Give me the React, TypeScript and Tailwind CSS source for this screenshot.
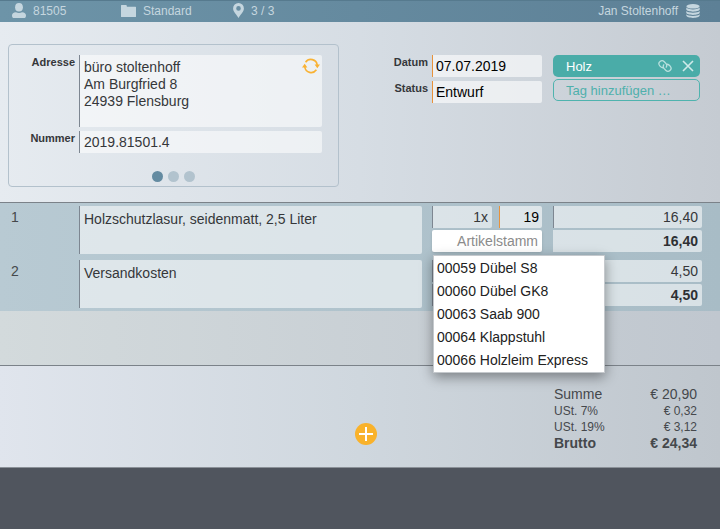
import { useState } from "react";
import type { ReactNode } from "react";

interface LineItem {
  pos: number;
  text: string;
  qty: string;
  vat: string;
  price: string;
  total: string;
}

const ITEMS: LineItem[] = [
  { pos: 1, text: "Holzschutzlasur, seidenmatt, 2,5 Liter", qty: "1x", vat: "19", price: "16,40", total: "16,40" },
  { pos: 2, text: "Versandkosten", qty: "1x", vat: "7", price: "4,50", total: "4,50" },
];

const ARTICLES = ["00059 Dübel S8", "00060 Dübel GK8", "00063 Saab 900", "00064 Klappstuhl", "00066 Holzleim Express"];

const TOTALS = [
  { label: "Summe", value: "€ 20,90", className: "h-[18px] text-sm leading-4" },
  { label: "USt. 7%", value: "€ 0,32", className: "text-xs leading-4" },
  { label: "USt. 19%", value: "€ 3,12", className: "text-xs leading-4" },
  { label: "Brutto", value: "€ 24,34", className: "text-sm leading-4 font-bold" },
];

const FIELD = "block w-full rounded-r-xs border-l border-[#7d8691] bg-white/55 px-1 outline-none";
const FIELD_ORANGE = "block w-full rounded-r-xs border-l border-[#e8923a] bg-white/60 px-[3px] text-black outline-none";
const AMOUNT = "block h-[22px] w-full rounded-r-xs bg-white/55 pr-1 text-right outline-none";

function UserIcon() {
  return (
    <svg viewBox="0 0 14 15" className="h-[15px] w-[14px]" fill="currentColor" aria-hidden="true">
      <ellipse cx="7" cy="4.3" rx="3.9" ry="4.3" />
      <path d="M4 9.2C5.5 10.2 8.5 10.2 10 9.2C12.6 9.4 14 10.7 14 12.4C14 14 13.3 15 11.8 15H2.2C.7 15 0 14 0 12.4C0 10.7 1.4 9.4 4 9.2Z" />
    </svg>
  );
}

function FolderIcon() {
  return (
    <svg viewBox="0 0 15 12" className="h-3 w-[15px]" fill="currentColor" aria-hidden="true">
      <path d="M0 .5Q0 0 .5 0H5Q5.6 0 5.7 .6L5.9 1.7H14.5Q15 1.7 15 2.2V11.5Q15 12 14.5 12H.5Q0 12 0 11.5Z" />
    </svg>
  );
}

function PinIcon() {
  return (
    <svg viewBox="0 0 11 15" className="h-[15px] w-[11px]" fill="currentColor" aria-hidden="true">
      <path
        fillRule="evenodd"
        d="M5.5 0A5.4 5.4 0 0 0 .1 5.4C.1 8.8 3.6 11.3 5.5 15C7.4 11.3 10.9 8.8 10.9 5.4A5.4 5.4 0 0 0 5.5 0ZM5.5 3.1A2.3 2.3 0 1 1 5.5 7.7A2.3 2.3 0 1 1 5.5 3.1Z"
      />
    </svg>
  );
}

function DatabaseIcon() {
  return (
    <svg viewBox="0 0 14 14" className="h-[14px] w-[14px]" fill="currentColor" aria-hidden="true">
      <ellipse cx="7" cy="2.3" rx="6.6" ry="2.3" />
      <path d="M.3 3.6C1.6 6 12.4 6 13.7 3.6V5.6C13 8.4 1 8.4 .3 5.6Z" />
      <path d="M.3 7C1.6 9.3 12.4 9.3 13.7 7V8.8C13 11.6 1 11.6 .3 8.8Z" />
      <path d="M.3 10.2C1.6 12.5 12.4 12.5 13.7 10.2V11.6C13 14.7 1 14.7 .3 11.6Z" />
    </svg>
  );
}

function SyncIcon() {
  return (
    <svg viewBox="0 0 18 16" className="h-4 w-[18px]" fill="none" aria-hidden="true">
      <path d="M3.6 4.2A6.4 6.4 0 0 1 15.2 7M14.4 11.8A6.4 6.4 0 0 1 2.8 9" stroke="#f9b233" strokeWidth="1.6" />
      <path d="M2.7 5.8L5.4 9.4H0ZM15.3 10.2L18 6.6H12.6Z" fill="#f9b233" />
    </svg>
  );
}

function LinkIcon() {
  return (
    <svg viewBox="0 0 14 14" className="h-[14px] w-[14px]" fill="none" stroke="currentColor" strokeWidth="1.3" aria-hidden="true">
      <path d="M5.6 8.6C3.9 9.2 2.7 8 1.8 6.9C.6 5.4 .7 3.6 2 2.5C3.3 1.3 5 1.4 6.3 2.7L8 4.6C9.1 6 9 7.4 7.9 8.6" />
      <path d="M8.4 5.4C10.1 4.8 11.3 6 12.2 7.1C13.4 8.6 13.3 10.4 12 11.5C10.7 12.7 9 12.6 7.7 11.3L6 9.4C4.9 8 5 6.6 6.1 5.4" />
    </svg>
  );
}

function HeaderItem({ icon, children }: { icon: ReactNode; children: ReactNode }) {
  return (
    <a href="#" className="flex items-center gap-[7px]">
      {icon}
      <span>{children}</span>
    </a>
  );
}

function ArticlePicker() {
  const [open, setOpen] = useState(true);
  return (
    <div className="relative">
      <input
        aria-label="Artikelstamm"
        placeholder="Artikelstamm"
        onFocus={() => setOpen(true)}
        className="block h-[22px] w-full rounded-xs bg-white pr-1 text-right shadow-sm outline-none placeholder:text-[#8b8b8b]"
      />
      {open && (
        <ul className="absolute top-[25px] left-px z-10 w-[172px] border border-[#c5c9cd] bg-white pt-px text-[#222] shadow-[0_4px_12px_rgba(0,0,0,0.4)]">
          {ARTICLES.map((a) => (
            <li key={a}>
              <button type="button" onClick={() => setOpen(false)} className="block h-[23px] w-full px-[3px] text-left whitespace-nowrap">
                {a}
              </button>
            </li>
          ))}
        </ul>
      )}
    </div>
  );
}

function ItemRow({ item, picker }: { item: LineItem; picker: boolean }) {
  return (
    <li className="grid grid-cols-[79px_1fr_120px_160px] pr-[18px]">
      <span className="pt-[3px] pl-[11px] text-[#45484b]">{item.pos}</span>
      <textarea
        aria-label={`Text ${item.pos}`}
        defaultValue={item.text}
        className={`${FIELD} h-[48px] resize-none pt-[5px]`}
      />
      <div className="space-y-[2px] pl-[10px]">
        <div className="grid grid-cols-[60px_43px] justify-between">
          <input aria-label={`Menge ${item.pos}`} defaultValue={item.qty} className={`${FIELD} h-[22px] text-right`} />
          <input aria-label={`USt. ${item.pos}`} defaultValue={item.vat} className={`${FIELD_ORANGE} h-[22px] text-right`} />
        </div>
        {picker ? <ArticlePicker /> : <input aria-label={`Artikel ${item.pos}`} className={`${FIELD} h-[22px]`} />}
      </div>
      <div className="space-y-[2px] pl-[11px]">
        <input aria-label={`Preis ${item.pos}`} defaultValue={item.price} className={`${AMOUNT} border-l border-[#7d8691]`} />
        <input aria-label={`Gesamt ${item.pos}`} defaultValue={item.total} readOnly className={`${AMOUNT} font-bold text-[#2e3033]`} />
      </div>
    </li>
  );
}

export default function App() {
  const [page, setPage] = useState(0);

  return (
    <div className="flex min-h-screen flex-col bg-[#50555e] font-['Liberation_Sans',Arial,sans-serif] text-sm leading-[17px] text-[#35373a]">
      <header className="flex h-[22px] items-center border-t border-[#567a8e] bg-linear-to-r from-[#6d94a8] to-[#5d8096] pr-5 pb-[2px] pl-3 text-xs text-[#c5d6df]">
        <nav className="grid grid-cols-[109px_112px_auto]">
          <HeaderItem icon={<UserIcon />}>81505</HeaderItem>
          <HeaderItem icon={<FolderIcon />}>Standard</HeaderItem>
          <HeaderItem icon={<PinIcon />}>3 / 3</HeaderItem>
        </nav>
        <a href="#" className="ml-auto flex items-center gap-2">
          <span>Jan Stoltenhoff</span>
          <DatabaseIcon />
        </a>
      </header>

      <main>
        <section className="flex items-start bg-linear-to-r from-[#e6ebf0] via-[#d6dde4] to-[#c5cbd2] pt-[22px] pr-5 pb-[15px] pl-2">
          <div className="h-[143px] w-[331px] rounded-sm border border-[#b3c1cc] pt-[10px] pr-4">
            <div className="grid grid-cols-[66px_1fr] gap-x-1 gap-y-1">
              <label htmlFor="adresse" className="text-right text-[11px] leading-[15px] font-bold">Adresse</label>
              <div className="relative">
                <textarea
                  id="adresse"
                  defaultValue={"büro stoltenhoff\nAm Burgfried 8\n24939 Flensburg"}
                  className={`${FIELD} h-[72px] resize-none pt-1`}
                />
                <button type="button" aria-label="Adresse aktualisieren" className="absolute top-[3px] right-[2px]">
                  <SyncIcon />
                </button>
              </div>
              <label htmlFor="nummer" className="text-right text-[11px] leading-[15px] font-bold">Nummer</label>
              <input id="nummer" defaultValue="2019.81501.4" className={`${FIELD} h-[22px]`} />
            </div>
            <div className="mt-[18px] flex justify-center gap-[5px] pl-4">
              {[0, 1, 2].map((i) => (
                <button
                  key={i}
                  type="button"
                  aria-label={`Seite ${i + 1}`}
                  onClick={() => setPage(i)}
                  className={`size-[11px] rounded-full ${i === page ? "bg-[#648ba1]" : "bg-[#b2c3ce]"}`}
                />
              ))}
            </div>
          </div>

          <div className="mt-[11px] ml-auto grid grid-cols-[40px_110px] gap-x-1 gap-y-1">
            <label htmlFor="datum" className="text-right text-[11px] leading-[15px] font-bold">Datum</label>
            <input id="datum" defaultValue="07.07.2019" className={`${FIELD_ORANGE} h-[22px]`} />
            <label htmlFor="status" className="text-right text-[11px] leading-[15px] font-bold">Status</label>
            <input id="status" defaultValue="Entwurf" className={`${FIELD_ORANGE} h-[22px]`} />
          </div>

          <div className="mt-[11px] ml-[11px] w-[147px] space-y-[2px] text-[13px]">
            <div className="flex h-[22px] items-center rounded-[5px] bg-[#4aaca8] pr-[5px] pl-[13px] text-white">
              <span className="flex-1">Holz</span>
              <a href="#" aria-label="Verknüpfung" className="mr-[9px] text-[#b9e0de]">
                <LinkIcon />
              </a>
              <button type="button" aria-label="Tag entfernen" className="text-[#cfeae9]">
                <svg viewBox="0 0 14 14" className="size-[14px]" stroke="currentColor" strokeWidth="1.6" aria-hidden="true">
                  <path d="M2 2L12 12M12 2L2 12" />
                </svg>
              </button>
            </div>
            <input
              aria-label="Tag hinzufügen"
              placeholder="Tag hinzufügen …"
              className="block h-[22px] w-full rounded-[5px] border border-[#4fb3ae] bg-transparent pl-3 outline-none placeholder:text-[#4fb0ac]"
            />
          </div>
        </section>

        <section className="border-y border-[#7b8289] bg-linear-to-r from-[#d3dadc] to-[#c0c7cf] pb-[54px]">
          <ol className="space-y-[6px] bg-linear-to-r from-[#b8cad3] to-[#a8bcc6] py-[3px]">
            {ITEMS.map((item) => (
              <ItemRow key={item.pos} item={item} picker={item.pos === 1} />
            ))}
          </ol>
        </section>

        <section className="grid grid-cols-[1fr_auto_1fr] border-b border-[#8b9198] bg-linear-to-r from-[#e0e5ed] via-[#cfd7de] to-[#bfc6cd] pt-[19px] pb-4">
          <button
            type="button"
            aria-label="Position hinzufügen"
            className="col-start-2 mt-[38px] ml-3 flex size-[22px] items-center justify-center rounded-full bg-[#f9b22b] text-white"
          >
            <svg viewBox="0 0 14 14" className="size-[14px]" stroke="currentColor" strokeWidth="2" aria-hidden="true">
              <path d="M7 0V14M0 7H14" />
            </svg>
          </button>
          <table className="mr-[23px] w-[143px] justify-self-end text-[#45484c]">
            <tbody>
              {TOTALS.map((t) => (
                <tr key={t.label} className={t.className}>
                  <th scope="row" className="p-0 text-left [font-weight:inherit]">{t.label}</th>
                  <td className="p-0 text-right">{t.value}</td>
                </tr>
              ))}
            </tbody>
          </table>
        </section>
      </main>
    </div>
  );
}
